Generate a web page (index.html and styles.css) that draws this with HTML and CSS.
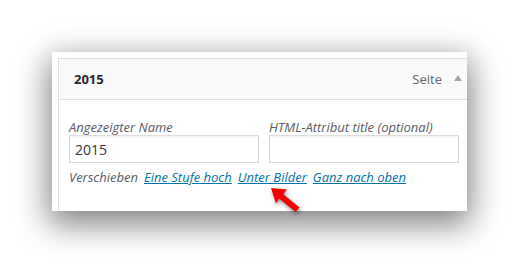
FILE: index.html
```html
<!DOCTYPE html>
<html lang="de">
<head>
  <meta charset="UTF-8">
  <title>Menüeintrag 2015</title>
  <link rel="stylesheet" href="styles.css">
</head>
<body>

  <div class="shot">
    <div class="panel">
      <div class="menu-item">
        <div class="item-bar">
          <span class="item-title">2015</span>
          <span class="item-type">Seite</span>
          <span class="item-toggle"></span>
        </div>

        <div class="item-settings">
          <div class="fields">
            <div class="field">
              <label for="nav-label">Angezeigter Name</label>
              <input type="text" id="nav-label" value="2015">
            </div>
            <div class="field">
              <label for="nav-title">HTML-Attribut title (optional)</label>
              <input type="text" id="nav-title">
            </div>
          </div>

          <div class="move-row">
            <span class="move-label">Verschieben</span>
            <a href="#">Eine Stufe hoch</a>
            <a href="#">Unter Bilder</a>
            <a href="#">Ganz nach oben</a>
          </div>
        </div>
      </div>
    </div>

    <!-- red pointer arrow -->
    <svg class="arrow" width="45" height="35" viewBox="0 0 45 35">
      <polygon points="11,6 27,7.4 23.2,12.2 39.6,25.4 35.6,30 19.1,16.6 16,21.4" fill="#f20000"/>
    </svg>
  </div>

</body>
</html>
```

FILE: styles.css
```css
body {
  margin: 0;
  background: #fff;
  font-family: "Open Sans", "Noto Sans", sans-serif;
}

.shot {
  position: relative;
  width: 519px;
  height: 264px;
  padding: 52px 0 0 52px;
  box-sizing: border-box;
}

.panel {
  width: 415px;
  height: 159px;
  background: #fff;
  overflow: hidden;
  box-shadow: 0 10px 30px 3px rgba(0, 0, 0, 0.5);
  padding: 6px 0 0 6px;
  box-sizing: border-box;
}

.menu-item {
  width: 415px;
  height: 200px;
  border: 1px solid #dfdfdf;
  border-right: none;
  background: #fff;
}

.item-bar {
  height: 40px;
  background: #fafafa;
  border-bottom: 1px solid #dfdfdf;
  display: flex;
  align-items: center;
  padding: 0 12px 0 15px;
}

.item-title {
  font-size: 13px;
  font-weight: 700;
  color: #23282d;
  flex: 1;
}

.item-type {
  font-size: 13px;
  color: #666;
}

.item-toggle {
  margin-left: 12px;
  width: 0;
  height: 0;
  border-left: 4px solid transparent;
  border-right: 4px solid transparent;
  border-bottom: 6px solid #a0a5aa;
  margin-top: -3px;
}

.item-settings {
  padding: 19px 0 0 10px;
}

.fields {
  display: flex;
  gap: 10px;
}

.field {
  width: 190px;
}

label {
  display: block;
  font-size: 13px;
  font-style: italic;
  line-height: 16px;
  color: #555d66;
}

input {
  display: block;
  width: 190px;
  height: 28px;
  box-sizing: border-box;
  border: 1px solid #ddd;
  padding: 0 5px;
  margin: 0;
  font-family: "Open Sans", "Noto Sans", sans-serif;
  font-size: 14px;
  color: #32373c;
  box-shadow: inset 0 1px 2px rgba(0, 0, 0, 0.07);
}

.move-row {
  display: flex;
  gap: 6px;
  margin-top: 5px;
  font-size: 13px;
  font-style: italic;
  line-height: 18px;
}

.move-label {
  color: #555d66;
}

.move-row a {
  color: #0073aa;
  text-decoration: underline;
}

.arrow {
  position: absolute;
  left: 260px;
  top: 182px;
  filter: drop-shadow(1px 2px 2px rgba(0, 0, 0, 0.45));
}
```
